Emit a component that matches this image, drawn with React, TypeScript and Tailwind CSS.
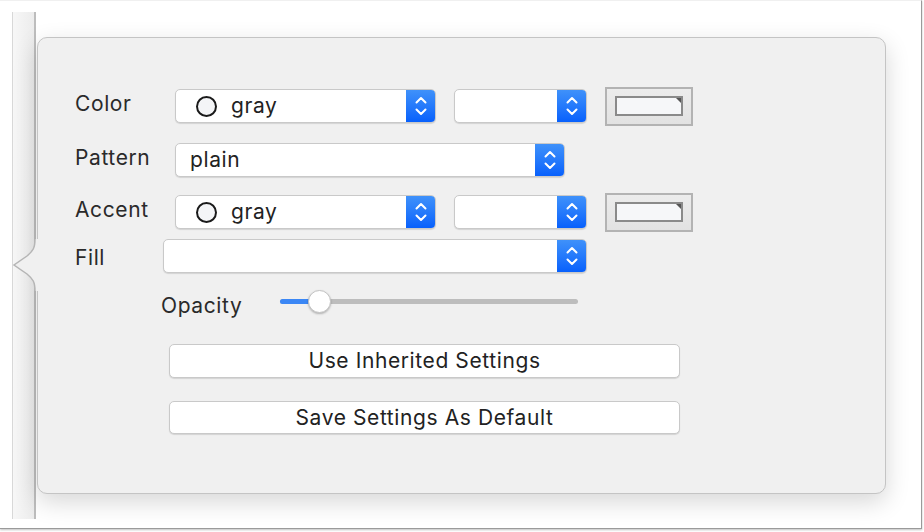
import React from "react";

const font = { fontFamily: "Inter, 'Liberation Sans', Arial, sans-serif" };

function Chevrons() {
  return (
    <svg width="12" height="20" viewBox="0 0 12 20" fill="none">
      <path d="M1.5 6.5 L6 2 L10.5 6.5" stroke="white" strokeWidth="2" strokeLinecap="round" strokeLinejoin="round" />
      <path d="M1.5 13.5 L6 18 L10.5 13.5" stroke="white" strokeWidth="2" strokeLinecap="round" strokeLinejoin="round" />
    </svg>
  );
}

function Popup({ width, children }: { width: string; children?: React.ReactNode }) {
  return (
    <div
      className={`${width} h-full flex items-stretch rounded-[5px] border border-[#c9c9c9] bg-white shadow-[0_1px_1px_rgba(0,0,0,0.12)] overflow-hidden`}
    >
      <div className="flex-1 flex items-center min-w-0">{children}</div>
      <div className="w-[29px] flex items-center justify-center bg-gradient-to-b from-[#3f91fa] to-[#0760fc]">
        <Chevrons />
      </div>
    </div>
  );
}

function ColorItem({ label }: { label: string }) {
  return (
    <div className="flex items-center pl-[20px] gap-[14px]">
      <div className="w-[21px] h-[21px] rounded-full border-2 border-[#1a1a1a] bg-[#f4f5f7]" />
      <span className="text-[21px] tracking-[0.6px] text-[#222] leading-none pb-[2px]">{label}</span>
    </div>
  );
}

function Well() {
  return (
    <div className="w-[88px] h-[39px] shrink-0 border-2 border-[#b3b3b3] bg-gradient-to-b from-[#ececec] to-[#e2e2e2] flex items-center justify-center">
      <div className="relative w-[68px] h-[20px] border-2 border-[#8a8a8a] bg-[#f6f7f9]">
        <svg className="absolute right-0 top-0" width="5" height="5" viewBox="0 0 5 5">
          <path d="M0 0 L5 0 L5 5 Z" fill="#555" />
        </svg>
      </div>
    </div>
  );
}

function Label({ children, w, shift = "pb-[5px]" }: { children: React.ReactNode; w: string; shift?: string }) {
  return <div className={`${w} ${shift} shrink-0 text-[21px] tracking-[0.6px] text-[#2a2a2a]`}>{children}</div>;
}

function Btn({ children, h }: { children: React.ReactNode; h: string }) {
  return (
    <div
      className={`ml-[94px] w-[511px] ${h} rounded-[5px] border border-[#c9c9c9] bg-white shadow-[0_1px_1px_rgba(0,0,0,0.12)] flex items-center justify-center text-[21px] tracking-[0.6px] text-[#222]`}
    >
      {children}
    </div>
  );
}

export default function App() {
  return (
    <div className="w-[924px] h-[532px] bg-white overflow-hidden" style={font}>
      <div className="w-[922px] h-[529px] border-r border-b border-[#9a9a9a] border-t border-t-[#f0f0f0] shadow-[0_1px_2px_rgba(0,0,0,0.25)] flex items-start bg-white">
        <div className="w-[12px] shrink-0" />
        <div className="mt-[11px] h-[507px] w-[24px] shrink-0 border-l border-[#d8d8d8] border-r-2 border-r-[#bdbdbd] bg-gradient-to-r from-[#f7f7f7] to-[#ececec]" />
        <div className="relative ml-[1px] mt-[36px] w-[849px] h-[457px] shrink-0 rounded-[10px] border border-[#c4c4c4] bg-[#f0f0f0] shadow-[0_8px_24px_rgba(0,0,0,0.16)]">
          <svg className="absolute" style={{ left: -27, top: 201 }} width="30" height="52" viewBox="0 0 30 52">
            <path d="M24 0 C24 9 22 12 16 17 L3 26 L16 35 C22 40 24 43 24 52 L30 52 L30 0 Z" fill="#f0f0f0" />
            <path d="M24 0 C24 9 22 12 16 17 L3 26 L16 35 C22 40 24 43 24 52" fill="none" stroke="#b5b5b5" strokeWidth="1.5" />
          </svg>

          <div className="pl-[37px] pt-[51px] flex flex-col">
            <div className="flex items-center h-[34px]">
              <Label w="w-[100px]">Color</Label>
              <Popup width="w-[261px]">
                <ColorItem label="gray" />
              </Popup>
              <div className="w-[18px]" />
              <Popup width="w-[133px]" />
              <div className="w-[18px]" />
              <Well />
            </div>

            <div className="flex items-center h-[34px] mt-[20px]">
              <Label w="w-[100px]">Pattern</Label>
              <Popup width="w-[390px]">
                <span className="pl-[14px] text-[21px] tracking-[0.6px] text-[#222] leading-none pb-[2px]">plain</span>
              </Popup>
            </div>

            <div className="flex items-center h-[34px] mt-[18px]">
              <Label w="w-[100px]">Accent</Label>
              <Popup width="w-[261px]">
                <ColorItem label="gray" />
              </Popup>
              <div className="w-[18px]" />
              <Popup width="w-[133px]" />
              <div className="w-[18px]" />
              <Well />
            </div>

            <div className="flex items-center h-[34px] mt-[10px]">
              <Label w="w-[88px]" shift="pt-[4px]">Fill</Label>
              <Popup width="w-[424px]" />
            </div>

            <div className="flex items-center h-[24px] mt-[16px]">
              <div className="ml-[86px] w-[119px] shrink-0 text-[21px] tracking-[0.6px] text-[#2a2a2a] pt-[10px]">Opacity</div>
              <div className="relative w-[298px] h-[5px] rounded-full bg-[#bdbdbd]">
                <div className="absolute left-0 top-0 h-[5px] w-[40px] rounded-l-full bg-[#3b87f5]" />
                <div className="absolute top-[-9px] left-[28px] w-[23px] h-[23px] rounded-full bg-white border border-[#c4c4c4] shadow-[0_1px_2px_rgba(0,0,0,0.25)]" />
              </div>
            </div>

            <div className="mt-[31px]">
              <Btn h="h-[34px]">Use Inherited Settings</Btn>
            </div>
            <div className="mt-[23px]">
              <Btn h="h-[33px]">Save Settings As Default</Btn>
            </div>
          </div>
        </div>
      </div>
    </div>
  );
}
